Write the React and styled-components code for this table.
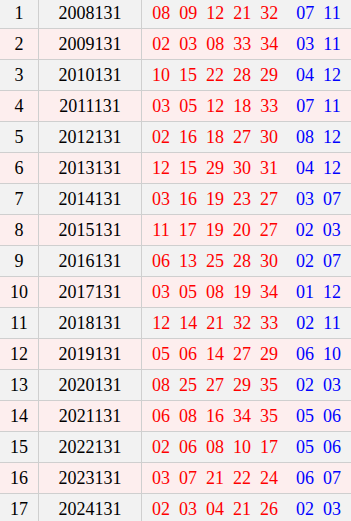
import React from "react";
import styled, { createGlobalStyle } from "styled-components";

const GlobalStyle = createGlobalStyle`
  html, body { margin: 0; padding: 0; background: #ffffff; overflow: hidden; }
  body { font-family: "Liberation Serif", "Times New Roman", serif; }
`;

const rows = [
  ["2008131", "08 09 12 21 32", "07 11"],
  ["2009131", "02 03 08 33 34", "03 11"],
  ["2010131", "10 15 22 28 29", "04 12"],
  ["2011131", "03 05 12 18 33", "07 11"],
  ["2012131", "02 16 18 27 30", "08 12"],
  ["2013131", "12 15 29 30 31", "04 12"],
  ["2014131", "03 16 19 23 27", "03 07"],
  ["2015131", "11 17 19 20 27", "02 03"],
  ["2016131", "06 13 25 28 30", "02 07"],
  ["2017131", "03 05 08 19 34", "01 12"],
  ["2018131", "12 14 21 32 33", "02 11"],
  ["2019131", "05 06 14 27 29", "06 10"],
  ["2020131", "08 25 27 29 35", "02 03"],
  ["2021131", "06 08 16 34 35", "05 06"],
  ["2022131", "02 06 08 10 17", "05 06"],
  ["2023131", "03 07 21 22 24", "06 07"],
  ["2024131", "02 03 04 21 26", "02 03"],
];

const Table = styled.div`
  display: flex;
  flex-direction: column;
  width: 351px;
  margin-top: -2px;
`;

const Row = styled.div`
  display: grid;
  grid-template-columns: 39px 103px 1fr;
  height: 31px;
  box-sizing: border-box;
  border-bottom: 1px solid #cfcfcf;
  background: ${(p) => (p.$alt ? "#fdeeee" : "#f2f2f2")};
`;

const Cell = styled.div`
  display: flex;
  align-items: center;
  justify-content: center;
  font-size: 18px;
  color: #000;
  border-right: ${(p) => (p.$last ? "none" : "1px solid #cfcfcf")};
  padding-top: 1px;
`;

const Balls = styled.div`
  display: flex;
  align-items: center;
  justify-content: center;
  gap: 18px;
  font-size: 18px;
  padding-top: 1px;
`;

const Group = styled.span`
  display: flex;
  gap: 9px;
  color: ${(p) => (p.$blue ? "#0000ff" : "#ff0000")};
`;

export default function App() {
  return (
    <>
      <GlobalStyle />
      <Table>
        {rows.map(([issue, red, blue], i) => (
          <Row key={issue} $alt={i % 2 === 1}>
            <Cell>{i + 1}</Cell>
            <Cell>{issue}</Cell>
            <Balls>
              <Group>
                {red.split(" ").map((n, k) => (
                  <span key={k}>{n}</span>
                ))}
              </Group>
              <Group $blue>
                {blue.split(" ").map((n, k) => (
                  <span key={k}>{n}</span>
                ))}
              </Group>
            </Balls>
          </Row>
        ))}
      </Table>
    </>
  );
}
